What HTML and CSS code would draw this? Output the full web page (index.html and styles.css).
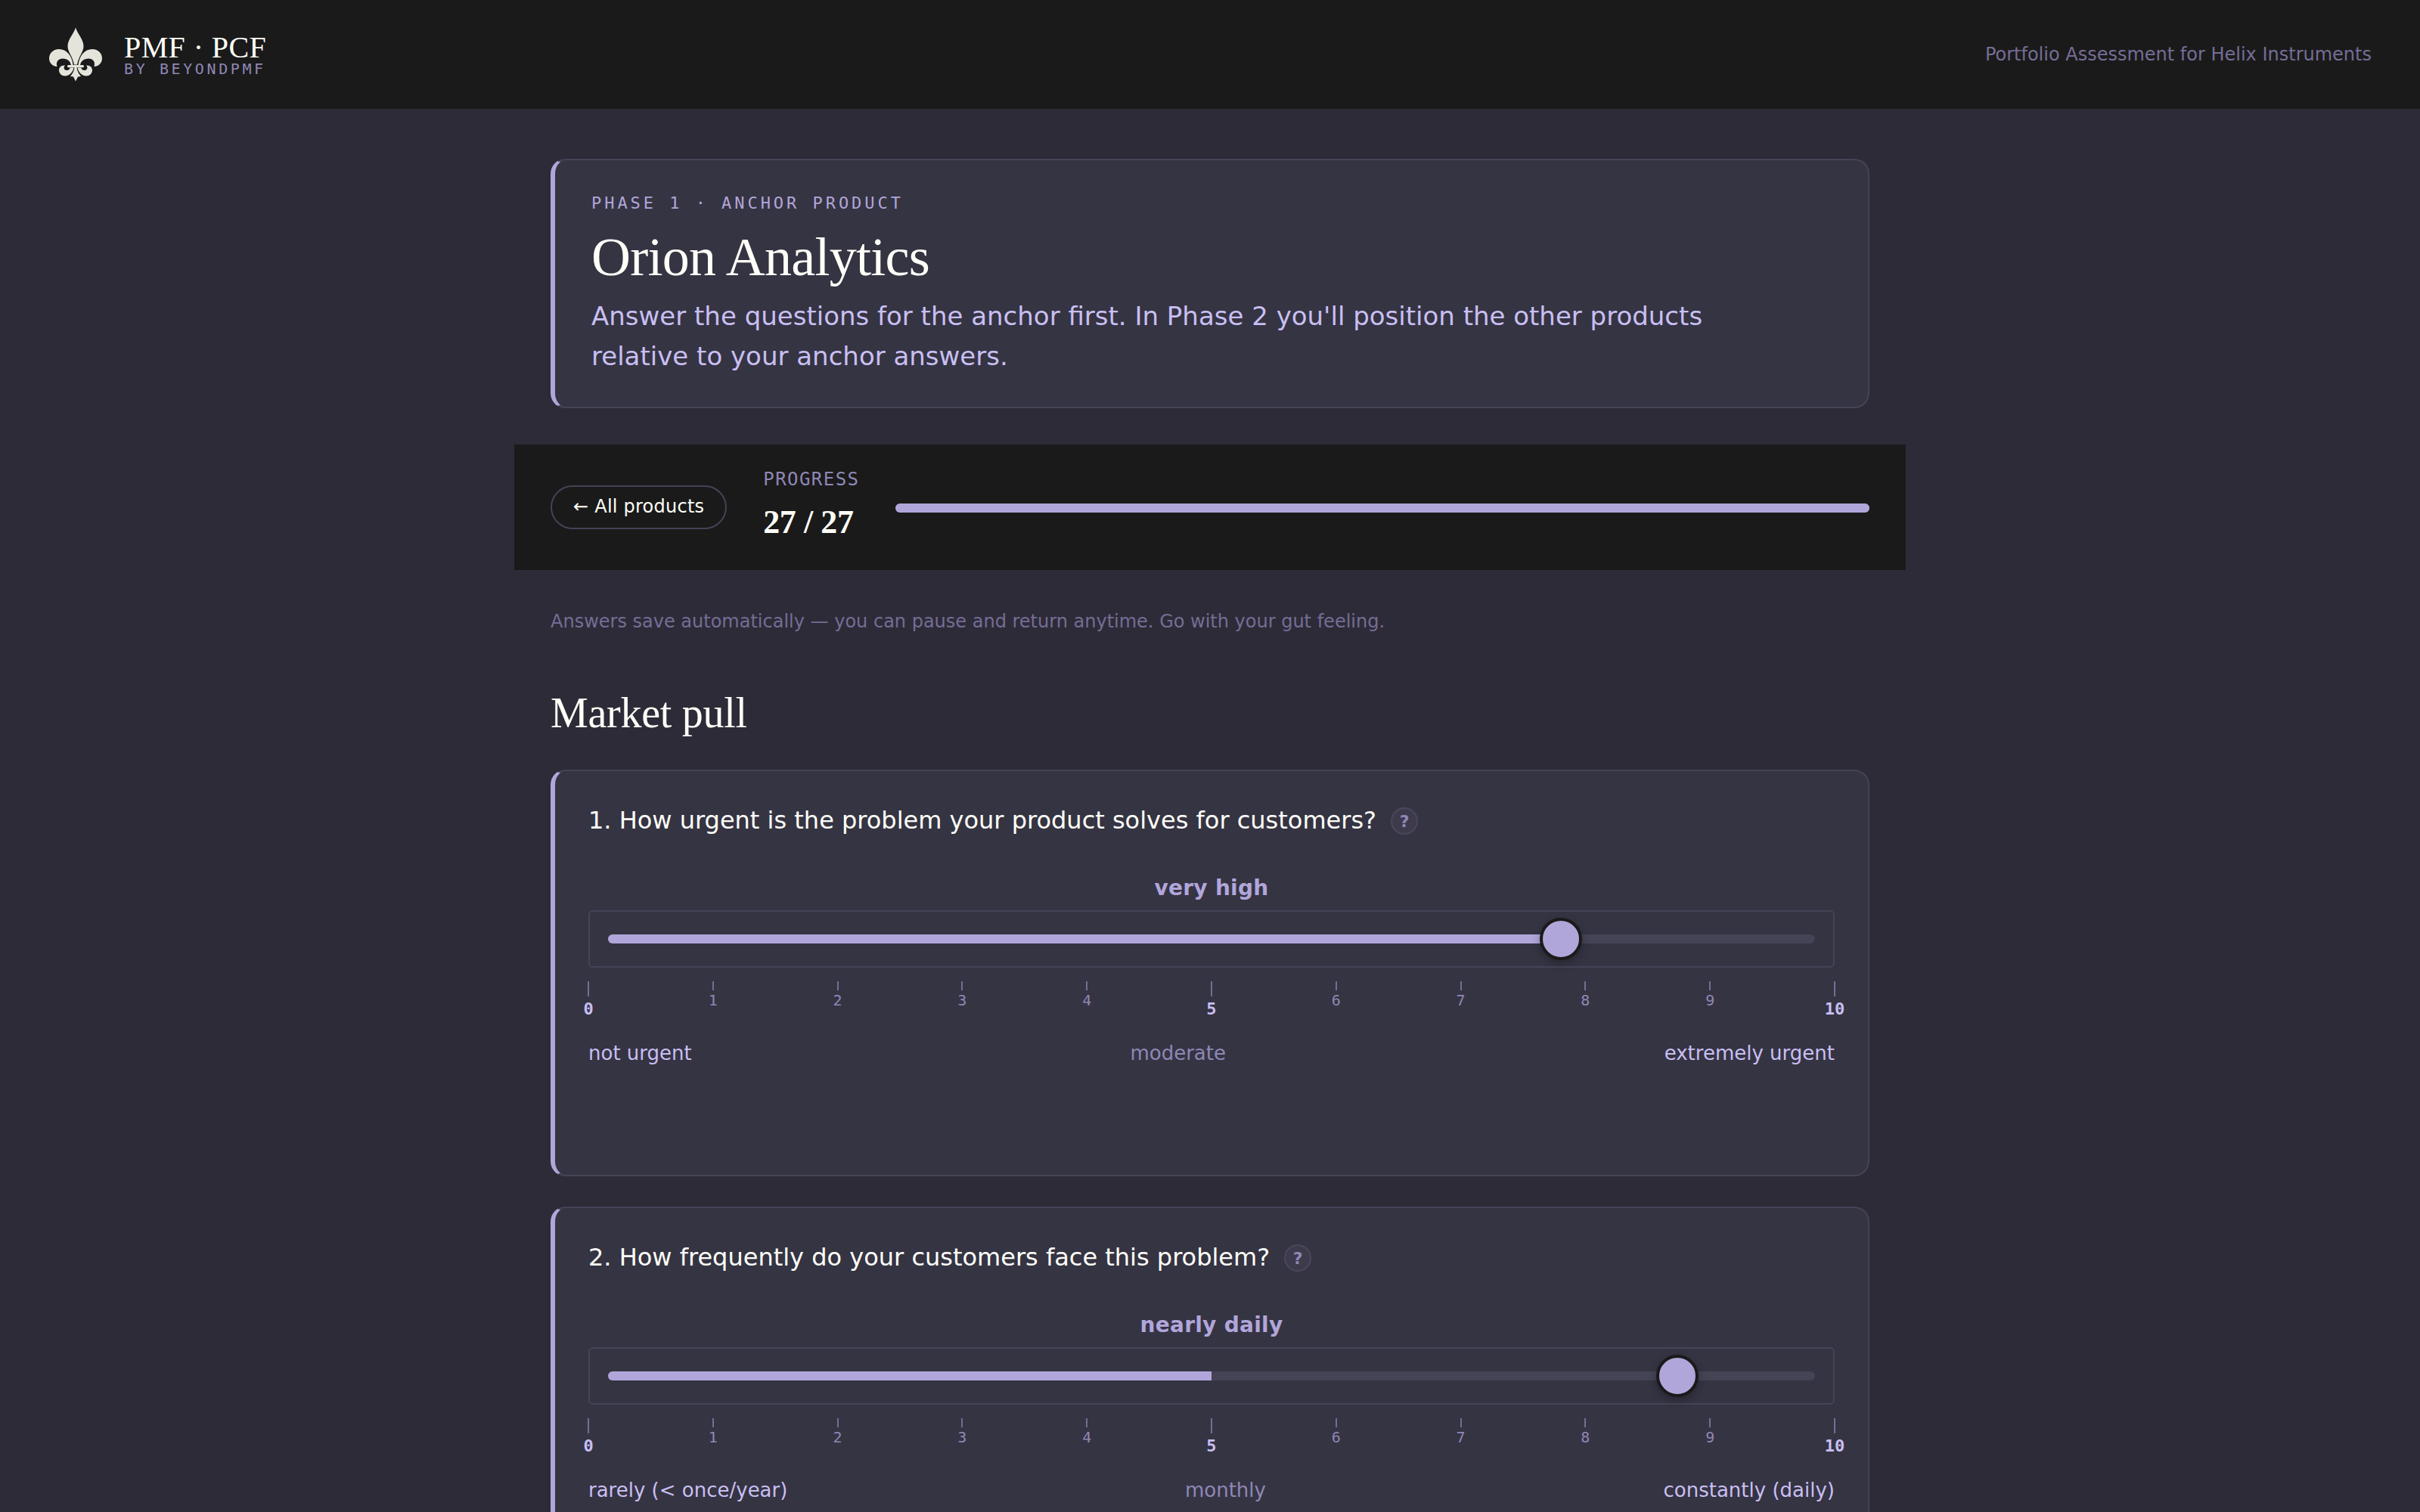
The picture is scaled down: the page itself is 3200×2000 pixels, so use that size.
FILE: index.html
```html
<!DOCTYPE html>
<html lang="en">
<head>
    <meta charset="UTF-8">
    <title>PMF · PCF - Orion Analytics</title>
    <meta name="viewport" content="width=device-width, initial-scale=1.0">
    <link rel="stylesheet" href="styles.css">
</head>
<body>

<header class="topbar">
    <div class="brand">
        <svg class="brand-logo" viewBox="0 0 72 72" aria-hidden="true">
            <path d="M36 0.5C34 8 25.500 16 25.500 25C25.500 33 32 38 34 49.500H38C40 38 46.500 33 46.500 25C46.500 16 38 8 36 0.500Z"/>
            <g id="half">
                <path d="M32.500 50C31.500 38 24 29 14 29C6 29 1 35 1 41C1 47 5 51.500 11.500 52C9.500 46 13 41.500 19 41.500C25 41.500 29 45 30 50Z"/>
                <path d="M33.500 53.500C32.500 60 27 64.500 22 64.500C17.500 64.500 14 61 14 57C14 53 17 50 22 50.500C19.500 53 20.500 56.500 24 57C27 57 28.500 55.500 28.500 53.500Z"/>
            </g>
            <use href="#half" transform="matrix(-1 0 0 1 72 0)"/>
            <rect x="25" y="50" width="22" height="3.200" rx="1.500"/>
            <path d="M34.500 53H37.500C38 58 40 61 43 65L39 65.500L36 71.500L33 65.500L29 65C32 61 34 58 34.500 53Z"/>
        </svg>
        <div class="brand-text">
            <span class="brand-name">PMF · PCF</span>
            <span class="brand-by">BY BEYONDPMF</span>
        </div>
    </div>
    <span class="topbar-note">Portfolio Assessment for Helix Instruments</span>
</header>

<main class="container">
    <section class="intro card">
        <p class="eyebrow">PHASE 1 · ANCHOR PRODUCT</p>
        <h1>Orion Analytics</h1>
        <p class="intro-text">Answer the questions for the anchor first. In Phase 2 you'll position the other products relative to your anchor answers.</p>
    </section>

    <div class="progress">
        <button type="button" class="back-button">← All products</button>
        <div class="progress-count">
            <span class="progress-label">PROGRESS</span>
            <span class="progress-value">27 / 27</span>
        </div>
        <div class="progress-bar"><div class="progress-fill" style="width: 100%"></div></div>
    </div>

    <p class="hint">Answers save automatically — you can pause and return anytime. Go with your gut feeling.</p>

    <h2>Market pull</h2>

    <section class="question card">
        <div class="question-title">1. How urgent is the problem your product solves for customers? <span class="help">?</span></div>
        <div class="answer">very high</div>
        <div class="slider">
            <div class="track">
                <div class="track-fill" style="width: 80%"></div>
                <div class="thumb-rail"><div class="thumb" style="left: 80%"></div></div>
            </div>
        </div>
        <div class="scale">
            <span class="tick major">0</span>
            <span class="tick">1</span>
            <span class="tick">2</span>
            <span class="tick">3</span>
            <span class="tick">4</span>
            <span class="tick major">5</span>
            <span class="tick">6</span>
            <span class="tick">7</span>
            <span class="tick">8</span>
            <span class="tick">9</span>
            <span class="tick major">10</span>
        </div>
        <div class="anchors">
            <span>not urgent</span>
            <span class="middle">moderate</span>
            <span>extremely urgent</span>
        </div>
    </section>

    <section class="question card">
        <div class="question-title">2. How frequently do your customers face this problem? <span class="help">?</span></div>
        <div class="answer">nearly daily</div>
        <div class="slider">
            <div class="track">
                <div class="track-fill" style="width: 50%"></div>
                <div class="thumb-rail"><div class="thumb" style="left: 90%"></div></div>
            </div>
        </div>
        <div class="scale">
            <span class="tick major">0</span>
            <span class="tick">1</span>
            <span class="tick">2</span>
            <span class="tick">3</span>
            <span class="tick">4</span>
            <span class="tick major">5</span>
            <span class="tick">6</span>
            <span class="tick">7</span>
            <span class="tick">8</span>
            <span class="tick">9</span>
            <span class="tick major">10</span>
        </div>
        <div class="anchors">
            <span>rarely (&lt; once/year)</span>
            <span class="middle">monthly</span>
            <span>constantly (daily)</span>
        </div>
    </section>
</main>

</body>
</html>
```
FILE: styles.css
```css
* {
    box-sizing: border-box;
}
body {
    margin: 0;
    background-color: #2d2b37;
    color: #fffff8;
    font-family: "DejaVu Sans", sans-serif;
}
p,
h1,
h2 {
    margin: 0;
}

/* Header */
.topbar {
    display: flex;
    justify-content: space-between;
    align-items: center;
    height: 144px;
    padding: 0 64px;
    background-color: #1a1a1a;
}
.brand {
    display: flex;
    align-items: center;
    gap: 28px;
}
.brand-logo {
    width: 72px;
    height: 72px;
    fill: #e5e4da;
}
.brand-text {
    display: flex;
    flex-direction: column;
}
.brand-name {
    font-family: "Liberation Serif", serif;
    font-size: 40px;
    line-height: 40px;
    letter-spacing: 0.01em;
}
.brand-by {
    margin: -1px 0 1px;
    font-family: "DejaVu Sans Mono", monospace;
    font-size: 20px;
    line-height: 18px;
    letter-spacing: 0.18em;
    color: #8f87b5;
}
.topbar-note {
    font-size: 24px;
    color: #756d96;
}

.container {
    width: 1840px;
    height: 1856px;
    margin: 0 auto;
    padding: 66px 48px 0;
    overflow: hidden;
}
.card {
    background-color: #353443;
    border: 2px solid #454356;
    border-left: 6px solid #b1a6da;
    border-radius: 20px;
}

/* Intro */
.intro {
    height: 330px;
    padding: 41px 46px 0 48px;
}
.eyebrow {
    font-family: "DejaVu Sans Mono", monospace;
    font-size: 22px;
    line-height: 32px;
    letter-spacing: 0.18em;
    color: #b1a6da;
}
h1 {
    margin-top: 15px;
    font-family: "Liberation Serif", serif;
    font-size: 72px;
    font-weight: 400;
    line-height: 80px;
    letter-spacing: -0.01em;
}
.intro-text {
    max-width: 1520px;
    margin-top: 12px;
    font-size: 34px;
    line-height: 52.7px;
    color: #c9bff2;
}

/* Progress */
.progress {
    display: flex;
    align-items: center;
    gap: 48px;
    height: 166px;
    margin: 48px -48px 0;
    padding: 0 48px;
    background-color: #1a1a1a;
}
.back-button {
    height: 58px;
    padding: 0 28px 2px;
    border: 2px solid #454356;
    border-radius: 29px;
    background: none;
    color: #fffff8;
    font-family: inherit;
    font-size: 24px;
    letter-spacing: 0.01em;
}
.progress-count {
    display: flex;
    flex-direction: column;
}
.progress-label {
    font-family: "DejaVu Sans Mono", monospace;
    font-size: 24px;
    line-height: 40px;
    letter-spacing: 0.06em;
    color: #8f87b5;
}
.progress-value {
    font-family: "Liberation Serif", serif;
    font-size: 44px;
    font-weight: 700;
    line-height: 74px;
    letter-spacing: -0.01em;
}
.progress-bar {
    flex: 1;
    height: 12px;
    margin-top: 2px;
    border-radius: 6px;
    background-color: #454356;
}
.progress-fill {
    height: 100%;
    border-radius: 6px;
    background-color: #b1a6da;
}
.hint {
    margin-top: 48px;
    font-size: 24px;
    line-height: 40px;
    color: #756d96;
}
h2 {
    margin-top: 67px;
    font-family: "Liberation Serif", serif;
    font-size: 56px;
    font-weight: 400;
    line-height: 68px;
    letter-spacing: -0.005em;
}

/* Questions */
.question {
    height: 538px;
    margin-bottom: 40px;
    padding: 40px 44px 0;
}
h2 + .question {
    margin-top: 41px;
}
.question-title {
    display: flex;
    align-items: center;
    gap: 19px;
    height: 50px;
    font-size: 32px;
}
.help {
    display: flex;
    align-items: center;
    justify-content: center;
    width: 36px;
    height: 36px;
    margin-top: 2px;
    border: 2px solid #4a475b;
    border-radius: 50%;
    background-color: #3d3a4c;
    color: #8f87b5;
    font-size: 22px;
    font-weight: 700;
}
.answer {
    margin-top: 45px;
    font-size: 28px;
    font-weight: 700;
    line-height: 40px;
    letter-spacing: 0.01em;
    text-align: center;
    color: #b1a6da;
}
.slider {
    display: flex;
    align-items: center;
    height: 76px;
    margin-top: 9px;
    padding: 0 24px;
    border: 2px solid #454356;
    border-radius: 6px;
}
.track {
    position: relative;
    flex: 1;
    height: 12px;
    border-radius: 6px;
    background-color: #454356;
}
.track-fill {
    height: 100%;
    border-radius: 6px 0 0 6px;
    background-color: #b1a6da;
}
/* inset by half a thumb so 0 and 10 stay inside the track */
.thumb-rail {
    position: absolute;
    top: 6px;
    left: 28px;
    right: 28px;
}
.thumb {
    position: absolute;
    width: 56px;
    height: 56px;
    border: 4px solid #1a1a1a;
    border-radius: 50%;
    background-color: #b1a6da;
    box-shadow: 0 4px 12px rgba(0, 0, 0, 0.3);
    transform: translate(-50%, -50%);
}
.scale {
    display: flex;
    justify-content: space-between;
    height: 64px;
    margin-top: 18px;
}
.tick {
    display: flex;
    flex-direction: column;
    align-items: center;
    width: 40px;
    font-family: "DejaVu Sans Mono", monospace;
    font-size: 20px;
    line-height: 24px;
    color: #8f87b5;
}
.tick:first-child {
    margin-left: -20px;
}
.tick:last-child {
    margin-right: -20px;
}
.tick::before {
    content: "";
    width: 2px;
    height: 12px;
    margin-bottom: 1px;
    background-color: #756d96;
}
.major {
    font-size: 22px;
    font-weight: 700;
    color: #c9bff2;
}
.major::before {
    height: 20px;
    margin-bottom: 5px;
}
.anchors {
    display: flex;
    justify-content: space-between;
    margin-top: 11px;
    font-size: 26px;
    line-height: 40px;
    color: #c9bff2;
}
.middle {
    color: #8f87b5;
}
```
